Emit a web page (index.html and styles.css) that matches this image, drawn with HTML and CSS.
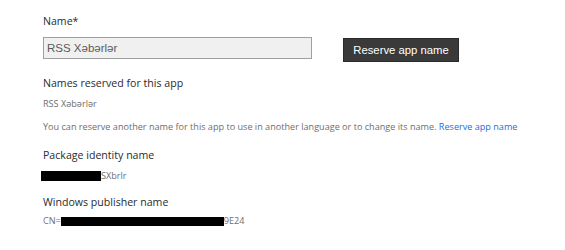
FILE: index.html
```html
<!DOCTYPE html>
<html lang="en">
<head>
    <meta charset="UTF-8">
    <title>App identity</title>
    <link rel="stylesheet" href="styles.css">
</head>
<body>
    <div class="identity">
        <div class="field-label">Name*</div>
        <div class="name-row">
            <input class="name-input" type="text" value="RSS Xəbərlər" disabled>
            <button type="button" class="reserve-btn">Reserve app name</button>
        </div>

        <div class="field-label reserved-label">Names reserved for this app</div>
        <div class="small-text reserved-name">RSS Xəbərlər</div>
        <div class="small-text reserve-note">You can reserve another name for this app to use in another language or to change its name. <a href="#">Reserve app name</a></div>

        <div class="field-label package-label">Package identity name</div>
        <div class="small-text redacted-line"><span class="redact redact-package"></span>SXbrlr</div>

        <div class="field-label publisher-label">Windows publisher name</div>
        <div class="small-text redacted-line publisher-line">CN=<span class="redact redact-publisher"></span>9E24</div>
    </div>
</body>
</html>
```

FILE: styles.css
```css
body {
    margin: 0;
    background: #fff;
    font-family: "Open Sans", "Noto Sans", sans-serif;
    color: #333;
}
.identity {
    padding: 13px 0 0 43px;
}
.field-label {
    font-size: 10.6px;
    line-height: 16px;
    color: #2b2b2b;
}
.name-row {
    display: flex;
    align-items: flex-start;
    gap: 31px;
    margin-top: 8px;
}
.name-input {
    box-sizing: border-box;
    width: 269px;
    height: 22px;
    margin: 0;
    padding: 0 3px;
    border: 1px solid #a0a0a0;
    background: #f0f0f0;
    font-family: "Liberation Sans", Arial, sans-serif;
    font-size: 11.5px;
    color: #5a5a5a;
}
.reserve-btn {
    box-sizing: border-box;
    width: 116px;
    height: 24px;
    margin-top: 1px;
    padding: 0;
    border: 1px solid #2a2a2a;
    background: #3a3a3a;
    color: #fff;
    font-family: "Liberation Sans", Arial, sans-serif;
    font-size: 11.3px;
}
.reserved-label {
    margin-top: 13px;
}
.small-text {
    font-size: 9.1px;
    line-height: 14px;
    color: #6e6e6e;
}
.reserved-name {
    margin-top: 6px;
}
.reserve-note {
    margin-top: 9px;
}
.reserve-note a {
    color: #1a6fe0;
    text-decoration: none;
}
.package-label {
    margin-top: 13px;
}
.redacted-line {
    display: flex;
    align-items: center;
    margin-top: 6px;
}
.redact {
    display: inline-block;
    height: 10px;
    background: #000;
}
.redact-package {
    width: 60px;
    margin-left: -2px;
}
.publisher-label {
    margin-top: 11px;
}
.publisher-line {
    margin-top: 4px;
}
.redact-publisher {
    width: 163px;
    height: 9px;
}
```
